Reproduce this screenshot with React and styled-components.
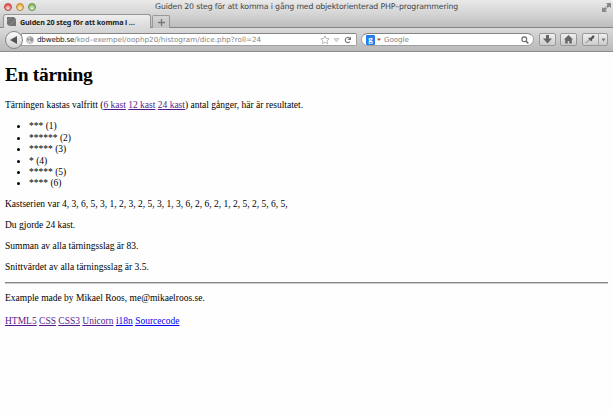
import React from "react";
import styled, { createGlobalStyle } from "styled-components";

const Global = createGlobalStyle`
  * { box-sizing: border-box; }
  html, body, #root { margin: 0; height: 100%; }
  body { overflow: hidden; background: #fefefe; }
`;

const Window = styled.div`
  display: flex;
  flex-direction: column;
  width: 613px;
  height: 413px;
  overflow: hidden;
  background: #fefefe;
  font-family: "DejaVu Sans", sans-serif;
`;

const Chrome = styled.header`
  flex: none;
  height: 28px;
  background: linear-gradient(#e9e9e9, #d5d5d5 50%, #bdbdbd);
  border-bottom: 1px solid #858585;
  border-radius: 3px 3px 0 0;
`;

const TitleBar = styled.div`
  display: grid;
  grid-template-columns: 155px 1fr 11px;
  align-items: center;
  height: 14px;
`;

const Lights = styled.div`
  display: flex;
  gap: 4px;
  padding: 0 0 1px 4px;
`;

const Light = styled.span`
  width: 8px;
  height: 8px;
  border-radius: 50%;
  border: 1px solid ${(p) => p.$edge};
  background: radial-gradient(circle at 50% 75%, #fff8, ${(p) => p.$fill} 70%);
`;

const Title = styled.div`
  font-size: 7.8px;
  line-height: 14px;
  letter-spacing: -0.15px;
  color: #444;
  white-space: nowrap;
`;

const TabStrip = styled.div`
  display: flex;
  align-items: flex-end;
  height: 14px;
  padding-left: 3px;
`;

const Tab = styled.div`
  display: flex;
  align-items: center;
  gap: 4px;
  width: 148px;
  height: 14px;
  padding-left: 3px;
  border: 1px solid #969696;
  border-bottom: 0;
  border-radius: 3px 3px 0 0;
  background: linear-gradient(#eeeeee, #d9d9d9);
  color: #222;
  font-family: "Noto Sans", sans-serif;
  font-size: 7.2px;
  font-weight: bold;
  white-space: nowrap;
`;

const TabLabel = styled.span`
  letter-spacing: -0.13px;
`;

const NewTab = styled.div`
  display: grid;
  place-items: center;
  width: 18px;
  height: 13px;
  margin-left: 1px;
  border: 1px solid #999;
  border-bottom: 0;
  border-radius: 2px 2px 0 0;
  background: linear-gradient(#d4d4d4, #c2c2c2);
`;

const NavBar = styled.nav`
  flex: none;
  display: flex;
  align-items: center;
  height: 24px;
  padding: 0 5px;
  background: linear-gradient(#dadada, #b9b9b9);
  border-bottom: 1px solid #8c8c8c;
`;

const Back = styled.div`
  z-index: 1;
  display: grid;
  place-items: center;
  width: 18px;
  height: 18px;
  border: 1px solid #858585;
  border-radius: 50%;
  background: linear-gradient(#fcfcfc, #cfcfcf);
`;

const Field = styled.div`
  display: flex;
  align-items: center;
  width: ${(p) => p.$width}px;
  height: 13px;
  border: 1px solid #a0a0a0;
  border-top-color: #858585;
  background: #fff;
  font-size: 7.2px;
  color: #858585;
  white-space: nowrap;
`;

const Address = styled(Field)`
  margin-left: -2px;
  padding: 0 4px 0 4px;
  border-radius: 0 2px 2px 0;
  gap: 3px;
`;

const Url = styled.span`
  flex: 1;
  letter-spacing: 0.02px;
`;

const Host = styled.span`
  color: #111;
  letter-spacing: -0.2px;
`;

const Search = styled(Field)`
  margin-left: 4px;
  padding: 0 4px;
  border-radius: 7px;
`;

const SearchHint = styled.span`
  flex: 1;
  margin-left: 2px;
  letter-spacing: -0.1px;
`;

const Engine = styled.span`
  display: grid;
  place-items: center;
  width: 9px;
  height: 10px;
  border-radius: 1px;
  background: #247fec;
  color: #fff;
  font: bold 9px/9px "Liberation Serif", serif;
`;

const ToolButton = styled.div`
  display: flex;
  align-items: center;
  justify-content: center;
  width: ${(p) => p.$width}px;
  height: 13px;
  margin-left: ${(p) => p.$gap}px;
  border: 1px solid #999;
  border-radius: 2px;
  background: linear-gradient(#eeeeee, #cccccc);
`;

const Divider = styled.span`
  width: 1px;
  height: 11px;
  margin: 0 2px 0 3px;
  background: #aaa;
`;

const Page = styled.main`
  padding: 0 5px;
  color: #000;
  font-family: "Liberation Serif", serif;
  font-size: 9.5px;
  line-height: 11.4px;
`;

const Heading = styled.h1`
  margin: 12px 0 14.3px;
  font-size: 19.5px;
  line-height: 22px;
  font-weight: bold;
  letter-spacing: -0.3px;
`;

const Text = styled.p`
  margin: 0 0 ${(p) => p.$after ?? 9.6}px;
  white-space: nowrap;
`;

const List = styled.ul`
  margin: 0 0 8.8px;
  padding: 0 0 0 24px;
`;

const Rule = styled.hr`
  height: 2px;
  margin: -0.5px 0 9.2px;
  border: 0;
  border-top: 1px solid #888;
  border-bottom: 1px solid #ccc;
`;

const Link = styled.a`
  color: ${(p) => (p.$fresh ? "#0000ee" : "#551a8b")};
  text-decoration: underline;
`;

const counts = [3, 6, 5, 1, 5, 4];

export default function App() {
  return (
    <Window>
      <Global />
      <Chrome>
        <TitleBar>
          <Lights>
            <Light $edge="#b8443d" $fill="#ee534b" />
            <Light $edge="#b98733" $fill="#efb13c" />
            <Light $edge="#659344" $fill="#83bf59" />
          </Lights>
          <Title>Guiden 20 steg för att komma i gång med objektorienterad PHP–programmering</Title>
          <svg width="9" height="9" viewBox="0 0 9 9" fill="#888">
            <path d="M4 0h5v5L7.3 3.5 5.7 5 4 3.3 5.6 1.7zM0 4l1.6 1.5L3.2 4 5 5.7 3.4 7.3 5 9H0z" />
          </svg>
        </TitleBar>
        <TabStrip>
          <Tab>
            <svg width="9" height="9" viewBox="0 0 9 9">
              <path d="M0 0h7l2 2v7H2L0 7z" fill="#747474" />
              <path d="M0 4l4-4M2 9l7-7" stroke="#8d8d8d" />
            </svg>
            <TabLabel>Guiden 20 steg för att komma i …</TabLabel>
          </Tab>
          <NewTab>
            <svg width="7" height="7" viewBox="0 0 7 7">
              <path d="M3.5 0v7M0 3.5h7" stroke="#777" strokeWidth="1.3" />
            </svg>
          </NewTab>
        </TabStrip>
      </Chrome>
      <NavBar>
        <Back>
          <svg width="8" height="8" viewBox="0 0 8 8"><path d="M0 4l7-4v8z" fill="#555" /></svg>
        </Back>
        <Address $width={336}>
          <svg width="8" height="8" viewBox="0 0 8 8">
            <circle cx="4" cy="4" r="3.5" fill="#ddd" stroke="#aaa" strokeWidth=".8" />
            <path d="M1 2l3 1-1 2-2-1M4 1l3 1v3L5 6 4 4z" fill="#999" />
          </svg>
          <Url><Host>dbwebb.se</Host>/kod–exempel/oophp20/histogram/dice.php?roll=24</Url>
          <svg width="32" height="10" viewBox="0 0 32 10" fill="none">
            <path d="M5 .8l1.2 2.7 3 .3L7 5.8l.7 3L5 7.3 2.3 8.8l.7-3L.8 3.8l3-.3z" stroke="#aaa" strokeWidth=".8" />
            <path d="M14 3.5h5L16.5 7z" fill="#ddd" stroke="#bbb" strokeWidth=".7" />
            <path d="M29.5 3A2.6 2.6 0 1 0 30 6.5" stroke="#777" strokeWidth="1.1" />
            <path d="M31 1.5V5h-3.5z" fill="#777" />
          </svg>
        </Address>
        <Search $width={173}>
          <Engine>g</Engine>
          <svg width="7" height="4" viewBox="0 0 7 4"><path d="M2 .5h4L4 3z" fill="#a65038" /></svg>
          <SearchHint>Google</SearchHint>
          <svg width="8" height="8" viewBox="0 0 8 8" fill="none" stroke="#666">
            <circle cx="3.3" cy="3.3" r="2.4" strokeWidth="1.1" /><path d="M5 5l2.3 2.4" strokeWidth="1.5" />
          </svg>
        </Search>
        <ToolButton $width={17} $gap={5}>
          <svg width="9" height="9" viewBox="0 0 9 9"><path d="M3 0h3v3.5h3L4.5 8.5 0 3.5h3z" fill="#666" /></svg>
        </ToolButton>
        <ToolButton $width={17} $gap={4}>
          <svg width="9" height="9" viewBox="0 0 9 9"><path d="M4.5 0L9 4.5H7.8V8.5H5.3V6H3.7v2.5H1.2v-4H0z" fill="#666" /></svg>
        </ToolButton>
        <ToolButton $width={26} $gap={5}>
          <svg width="11" height="9" viewBox="0 0 11 9">
            <path d="M1 8l4-4 1.3 1.3-3.8 3z" fill="#aaa" />
            <path d="M4.3 3.5l1.2-1 1 .5L8.5.4h1.8v2L8 4.4l.3 1-1 .9z" fill="#555" />
          </svg>
          <Divider />
          <svg width="5" height="4" viewBox="0 0 5 4"><path d="M.5.5h4L2.5 3.5z" fill="#777" /></svg>
        </ToolButton>
      </NavBar>
      <Page>
        <Heading>En tärning</Heading>
        <Text>
          Tärningen kastas valfritt (<Link>6 kast</Link> <Link>12 kast</Link> <Link>24 kast</Link>) antal gånger, här är resultatet.
        </Text>
        <List>
          {counts.map((n, i) => (
            <li key={i}>{"*".repeat(n)} ({i + 1})</li>
          ))}
        </List>
        <Text>Kastserien var 4, 3, 6, 5, 3, 1, 2, 3, 2, 5, 3, 1, 3, 6, 2, 6, 2, 1, 2, 5, 2, 5, 6, 5,</Text>
        <Text>Du gjorde 24 kast.</Text>
        <Text>Summan av alla tärningsslag är 83.</Text>
        <Text>Snittvärdet av alla tärningsslag är 3.5.</Text>
        <Rule />
        <Text $after={11}>Example made by Mikael Roos, me@mikaelroos.se.</Text>
        <Text>
          <Link>HTML5</Link> <Link>CSS</Link> <Link>CSS3</Link> <Link>Unicorn</Link> <Link $fresh>i18n</Link> <Link $fresh>Sourcecode</Link>
        </Text>
      </Page>
    </Window>
  );
}
